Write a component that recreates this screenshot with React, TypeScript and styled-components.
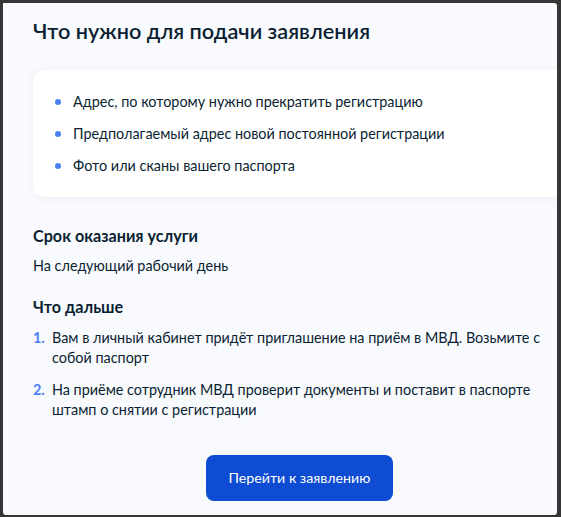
import React from "react"
import styled, { createGlobalStyle } from "styled-components"

const GlobalStyle = createGlobalStyle`
  html, body {
    margin: 0;
    padding: 0;
    background: #363636;
  }
  body {
    font-family: Lato, "Noto Sans", sans-serif;
    color: #0b1f33;
  }
`

const documents = [
  "Адрес, по которому нужно прекратить регистрацию",
  "Предполагаемый адрес новой постоянной регистрации",
  "Фото или сканы вашего паспорта",
]

const nextSteps = [
  "Вам в личный кабинет придёт приглашение на приём в МВД. Возьмите с собой паспорт",
  "На приёме сотрудник МВД проверит документы и поставит в паспорте штамп о снятии с регистрации",
]

const App = () => {
  return (
    <Frame>
      <GlobalStyle />
      <Panel>
        <Content>
          <Title>Что нужно для подачи заявления</Title>
          <Card>
            <BulletList>
              {documents.map((item) => (
                <BulletItem key={item}>{item}</BulletItem>
              ))}
            </BulletList>
          </Card>

          <Section>
            <SectionTitle>Срок оказания услуги</SectionTitle>
            <Text>На следующий рабочий день</Text>
          </Section>

          <Section $top={19}>
            <SectionTitle>Что дальше</SectionTitle>
            <Steps>
              {nextSteps.map((step, i) => (
                <Step key={i}>
                  <StepNumber>{i + 1}.</StepNumber>
                  <Text>{step}</Text>
                </Step>
              ))}
            </Steps>
          </Section>

          <Actions>
            <Button type="button">Перейти к заявлению</Button>
          </Actions>
        </Content>
      </Panel>
    </Frame>
  )
}

export default App

const Frame = styled.div`
  width: 561px;
  height: 517px;
  box-sizing: border-box;
  padding: 3px 4px 2px 3px;
  display: flex;
`

const Panel = styled.div`
  flex: 1;
  background: #f8fafd;
  border-radius: 0 3px 3px 3px;
  overflow: hidden;
  padding: 12px 0 0 30px;
`

const Content = styled.div`
  width: 533px;
  display: flex;
  flex-direction: column;
`

const Title = styled.h2`
  margin: 0;
  font-size: 21.7px;
  line-height: 32px;
  font-weight: 600;
  color: #0b1f33;
`

const Card = styled.div`
  margin-top: 23px;
  background: #ffffff;
  border-radius: 12px;
  box-shadow: 0 1px 8px rgba(20, 50, 110, 0.06);
  padding: 22px 24px 21px 20px;
`

const BulletList = styled.ul`
  margin: 0;
  padding: 0;
  list-style: none;
  display: flex;
  flex-direction: column;
  gap: 12px;
`

const BulletItem = styled.li`
  position: relative;
  padding-left: 20px;
  font-size: 14.4px;
  line-height: 20px;
  color: #0b1f33;

  &::before {
    content: "";
    position: absolute;
    left: 2px;
    top: 7px;
    width: 6px;
    height: 6px;
    border-radius: 50%;
    background: #4d80f5;
  }
`

const Section = styled.div<{ $top?: number }>`
  margin-top: ${({ $top }) => $top ?? 27}px;
  display: flex;
  flex-direction: column;
  gap: 8px;
`

const SectionTitle = styled.h3`
  margin: 0;
  font-size: 16.2px;
  line-height: 24px;
  font-weight: 700;
  color: #0b1f33;
`

const Text = styled.p`
  margin: 0;
  font-size: 14.4px;
  line-height: 20px;
  color: #0b1f33;
`

const Steps = styled.ol`
  margin: 1px 0 0;
  padding: 0;
  list-style: none;
  display: flex;
  flex-direction: column;
  gap: 12px;
`

const Step = styled.li`
  display: grid;
  grid-template-columns: 19px 1fr;
`

const StepNumber = styled.span`
  font-size: 14.4px;
  line-height: 20px;
  font-weight: 700;
  color: #4d80f5;
`

const Actions = styled.div`
  margin-top: 35px;
  display: flex;
  justify-content: center;
`

const Button = styled.button`
  height: 46px;
  padding: 0 23px;
  border: none;
  border-radius: 8px;
  background: #0d4cd3;
  color: #ffffff;
  font-family: Lato, "Noto Sans", sans-serif;
  font-size: 14.2px;
  line-height: 20px;
  cursor: pointer;
`
